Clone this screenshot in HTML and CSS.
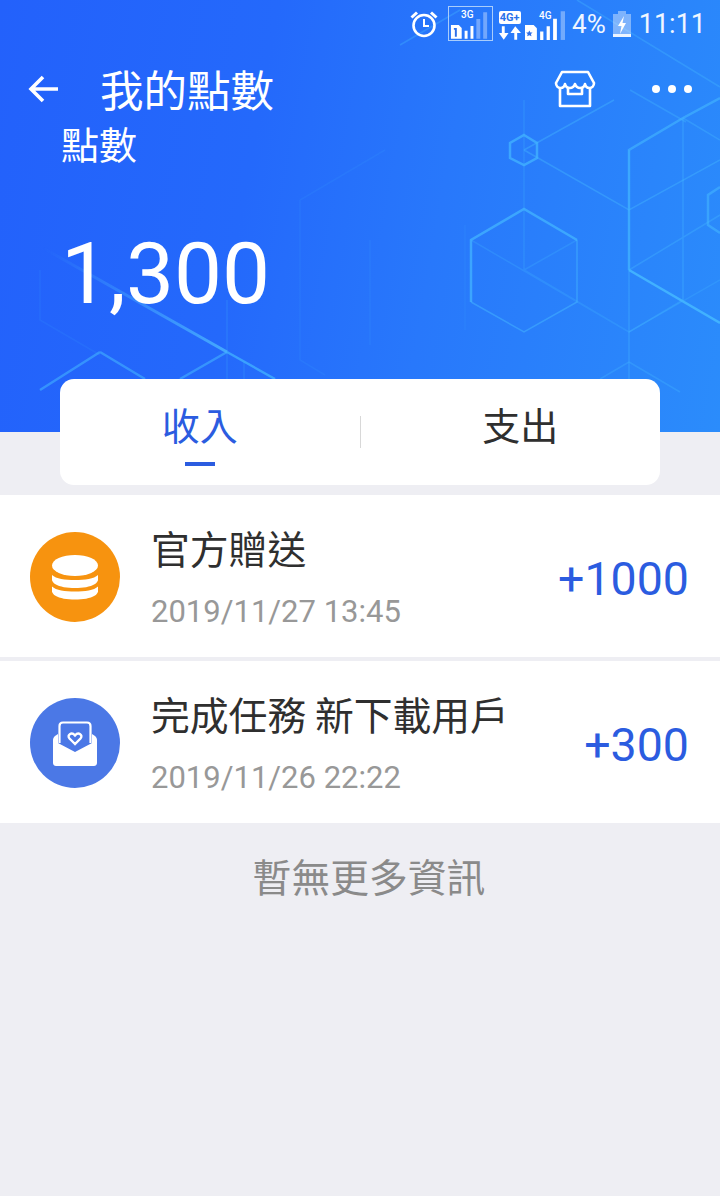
FILE: index.html
```html
<!DOCTYPE html>
<html lang="zh-Hant">
<head>
<meta charset="utf-8">
<title>我的點數</title>
<link rel="stylesheet" href="styles.css">
</head>
<body>
<div class="page">
  <header class="hero">
    <svg class="pattern" width="720" height="432" viewBox="0 0 720 432" fill="none">
      <defs>
        <linearGradient id="beam" gradientUnits="userSpaceOnUse" x1="43" y1="248" x2="227" y2="352">
          <stop offset="0" stop-color="#4db8ff" stop-opacity="0"/>
          <stop offset="1" stop-color="#4db8ff" stop-opacity=".8"/>
        </linearGradient>
      </defs>
      <path stroke="url(#beam)" stroke-width="3" d="M43 248L227 352"/>
      <g stroke="#45b8ff" stroke-opacity=".5" stroke-width="1.5">
        <path stroke-width="2.5" stroke-opacity=".7" d="M471 302V240L524 209L577 240"/>
        <path stroke-opacity=".5" d="M577 240V302L524 332L471 302"/>
        <path stroke-opacity=".25" d="M524 100V270L629 332L720 280M524 270L577 240M471 240L629 332"/>
        <path stroke-width="2.5" stroke-opacity=".7" d="M524 135L537 143V158L524 165L510 158V143Z"/>
        <path stroke-opacity=".4" d="M524 150L614 100M524 150L629 210L720 160"/>
        <path stroke-width="2.5" stroke-opacity=".6" d="M629 270V150L683 118L720 98"/>
        <path stroke-width="2.5" stroke-opacity=".85" d="M629 270L720 323"/>
        <path stroke-opacity=".35" d="M629 270L720 215M629 150V432M683 118V300M683 118L720 140"/>
        <path stroke-width="2.5" stroke-opacity=".55" d="M720 187L708 195V225L720 233"/>
        <path stroke-opacity=".3" d="M629 332L683 300M629 362L600 379M629 362L680 392"/>
        <path stroke-opacity=".1" d="M300 200V360L325 375M300 200L385 150M465 225V330M370 240V345M40 270V320L100 355"/>
        <path stroke-width="2.5" stroke-opacity=".7" d="M227 352L275 379"/>
        <path stroke-width="2.5" stroke-opacity=".55" d="M227 352L180 379M100 352L40 390M100 352L145 379"/>
        <path stroke-opacity=".2" d="M227 300V379M244 362V379"/>
        <path stroke-opacity=".35" d="M400 45L460 10M577 0L720 87M630 90L686 122"/>
      </g>
    </svg>
    <div class="statusbar">
      <svg class="alarm" width="30" height="30" viewBox="0 0 30 30" fill="none" stroke="#fff" stroke-width="2.6">
        <circle cx="15" cy="16.500" r="10.500"/>
        <path stroke-width="2" d="M15 10v7h5"/>
        <path stroke-width="3" d="M2.500 8.500L8 3.500M27.500 8.500L22 3.500"/>
      </svg>
      <div class="sim sim-active">
        <span class="net">3G</span>
        <svg width="44" height="32" viewBox="0 0 44 32" fill="#fff">
          <path d="M2 17h8l3 3v11H2z"/>
          <path fill="#2f6fe8" d="M5 20h3v9H6v-7H5z"/>
          <path d="M16 23h3v8h-3zM22 18h3v13h-3z"/>
          <path fill-opacity=".35" d="M28 11h4v20h-4zM35 4h4v27h-4z"/>
        </svg>
      </div>
      <div class="updown">
        <span class="net-tag">4G+</span>
        <svg width="23" height="14" viewBox="0 0 24 14" fill="#fff">
          <path d="M4 0h3v7h4l-5 7-5-7h3zM17 14h3V7h4l-6-7-5 7h4z"/>
        </svg>
      </div>
      <div class="sim sim-plain">
        <span class="net net-plain">4G</span>
        <svg width="40" height="34" viewBox="1 0 37 32" preserveAspectRatio="none" fill="#fff">
          <path d="M1 17h8l3 3v11H1z"/>
          <path fill="#2f6fe8" d="M5 22l1 2h2l-1.500 1.500.5 2-2-1-2 1 .5-2L2 24h2z"/>
          <path d="M15 23h3v8h-3zM21 18h3v13h-3zM27 11h3.500v20H27z"/>
          <path fill-opacity=".35" d="M34 4h4v27h-4z"/>
        </svg>
      </div>
      <span class="status-text status-pct">4%</span>
      <svg class="battery" width="20" height="28" viewBox="0 0 20 28">
        <path fill="#fff" fill-opacity=".4" d="M6 1h8v3h5v23H1V4h5z"/>
        <path fill="#fff" fill-opacity=".85" d="M1 24h18v3H1z"/>
        <path fill="#fff" d="M12 6L6 16h3.500L8 24l6-11h-3.500z"/>
      </svg>
      <span class="status-text">11:11</span>
    </div>
    <nav class="navbar">
      <svg class="back" width="32" height="30" viewBox="0 0 32 30" fill="none" stroke="#fff" stroke-width="3.600">
        <path d="M30 15H3M15 3L3 15l12 12"/>
      </svg>
      <h1 class="title">我的點數</h1>
      <svg class="shop" width="42" height="40" viewBox="0 0 42 40" fill="none" stroke="#fff" stroke-width="2.600" stroke-linejoin="round">
        <path d="M8 3h26l6 11c0 3-2 5-4.500 5-2.500 0-4-1.500-4.500-4-.5 2.500-2.500 4-5 4s-4-1.500-5-4c-1 2.500-2.500 4-5 4s-4.500-1.500-5-4c-.5 2.500-2 4-4.500 4C4 19 2 17 2 14z"/>
        <path d="M6 19v18h30V19"/>
        <path d="M14 18v7h14v-7"/>
      </svg>
      <div class="dots"><i></i><i></i><i></i></div>
    </nav>
    <div class="label">點數</div>
    <div class="points">1,300</div>
  </header>

  <div class="tabs">
    <div class="tab tab-on">收入<span class="tab-line"></span></div>
    <span class="tab-sep"></span>
    <div class="tab tab-off">支出</div>
  </div>

  <section class="list">
    <article class="row">
      <span class="badge badge-orange">
        <svg width="46" height="45" viewBox="0 0 46 45" fill="#fff">
          <ellipse cx="23" cy="10.500" rx="23" ry="10.500"/>
          <path d="M0 20C4 24 13 25 23 25S42 24 46 20C47 24 46 27 43 29 38 32 31 33 23 33S8 32 3 29C0 27-1 24 0 20z"/>
          <path d="M0 31.500C4 35.500 13 36.500 23 36.500S42 35.500 46 31.500C47 35.500 46 38.500 43 40.500 38 43.500 31 44.500 23 44.500S8 43.500 3 40.500C0 38.500-1 35.500 0 31.500z"/>
        </svg>
      </span>
      <div class="info">
        <div class="name">官方贈送</div>
        <div class="date">2019/11/27 13:45</div>
      </div>
      <div class="amount">+1000</div>
    </article>
    <article class="row">
      <span class="badge badge-blue">
        <svg width="44" height="45" viewBox="0 0 44 45" fill="none">
          <path fill="#fff" d="M0 19c0-2 1-3 2-4l3-2v9l17 9 17-9v-9l3 2c1 1 2 2 2 4v23c0 2-1.500 3-3 3H3c-1.500 0-3-1-3-3z"/>
          <path stroke="#fff" stroke-width="2.200" d="M6.500 22V5c0-2 1.500-3.500 3.500-3.500h24C36 1.500 37.500 3 37.500 5v17"/>
          <path stroke="#fff" stroke-width="2.400" d="M22 23l-5.500-5.500c-3-3.500 2-7 5.500-3 3.500-4 8.500-.5 5.500 3z"/>
        </svg>
      </span>
      <div class="info">
        <div class="name">完成任務 新下載用戶</div>
        <div class="date">2019/11/26 22:22</div>
      </div>
      <div class="amount">+300</div>
    </article>
  </section>

  <p class="empty">暫無更多資訊</p>
</div>
</body>
</html>
```
FILE: styles.css
```css
* { box-sizing: border-box; }
html, body { margin: 0; padding: 0; }
body {
  background: #eeeef3;
  font-family: "Noto Sans CJK TC", "Roboto", sans-serif;
}
.page { width: 720px; min-height: 1196px; overflow: hidden; }

.hero {
  position: relative;
  height: 432px;
  background: linear-gradient(100deg, #2361fb 0%, #2469fb 35%, #2878fb 60%, #2b8cfb 100%);
  color: #fff;
  overflow: hidden;
}
.pattern { position: absolute; left: 0; top: 0; filter: blur(.6px); }

.statusbar {
  position: relative;
  height: 44px;
  display: flex;
  align-items: center;
  padding: 3px 14px 0 0;
  justify-content: flex-end;
}
.alarm { margin-right: 9px; }
.sim { position: relative; display: flex; height: 34px; align-items: flex-end; }
.sim-active { width: 45px; height: 35px; border: 1px solid #a9cdfb; margin-right: 5px; }
.sim-plain { width: 40px; }
.net {
  position: absolute; left: 12px; top: 2px;
  font: 500 10px/12px "Roboto", sans-serif; color: #fff;
}
.net-plain { left: 14px; top: 3px; }
.updown { display: flex; flex-direction: column; align-items: center; gap: 2px; width: 23px; margin: 4px 4px 0 0; }
.net-tag {
  background: #fff; color: #2a72ea; border-radius: 2px;
  font: 700 11px/13px "Roboto", sans-serif; padding: 0 1px;
  white-space: nowrap;
}
.status-text {
  font: 400 27px/32px "Roboto", sans-serif;
  color: #f0f6ff;
}
.status-pct { font-size: 26px; margin-left: 7px; }
.battery { margin: 0 7px 0 6px; }

.navbar {
  position: relative;
  display: flex;
  align-items: center;
  height: 56px;
  margin-top: 17px;
  padding-left: 28px;
}
.back { flex: none; }
.title {
  margin: 0 0 0 40px;
  font-weight: 400;
  font-size: 43.500px;
  line-height: 56px;
  flex: 1;
  white-space: nowrap;
}
.shop { flex: none; margin-right: 56px; }
.dots { display: flex; gap: 8px; margin-right: 28px; flex: none; }
.dots i { width: 8px; height: 8px; border-radius: 50%; background: #fff; }

.label {
  position: relative;
  margin: 4px 0 0 61px;
  font-size: 38px;
  line-height: 44px;
}
.points {
  position: relative;
  margin: 59px 0 0 61px;
  font: 400 85.500px/100px "Roboto", sans-serif;
}

.tabs {
  position: relative;
  margin: -53px 60px 0;
  height: 106px;
  background: #fff;
  border-radius: 14px;
  display: flex;
  align-items: center;
}
.tab {
  position: relative;
  flex: 1;
  height: 106px;
  text-align: center;
  font-size: 38px;
  line-height: 90px;
  color: #2f2f2f;
}
.tab-on { color: #2b5ce0; padding-right: 20px; }
.tab-off { padding-left: 20px; }
.tab-line {
  position: absolute;
  left: 125px; bottom: 19px;
  width: 30px; height: 4px;
  background: #2b5ce0;
}
.tab-sep { flex: none; width: 1px; height: 32px; background: #d8d8d8; }

.list { margin-top: 10px; display: flex; flex-direction: column; gap: 4px; }
.row {
  height: 162px;
  background: #fff;
  display: flex;
  align-items: center;
  padding: 0 31px 0 30px;
}
.badge {
  flex: none;
  width: 90px; height: 90px;
  margin-top: 2px;
  border-radius: 50%;
  display: flex;
  align-items: center;
  justify-content: center;
}
.badge-orange { background: #f7930f; }
.badge-blue { background: #4b78e6; }
.info { flex: 1; margin-left: 31px; min-width: 0; padding-bottom: 2px; }
.name {
  font-size: 38.800px;
  line-height: 54px;
  color: #2f2f2f;
  white-space: nowrap;
}
.date {
  margin-top: 20px;
  font: 400 31px/36px "Roboto", sans-serif;
  color: #989898;
  white-space: nowrap;
}
.amount {
  flex: none;
  padding-top: 6px;
  font: 400 46.500px/60px "Roboto", sans-serif;
  color: #2b5ce0;
}
.empty {
  margin: 24px 0 0;
  padding-left: 18px;
  text-align: center;
  font-size: 38.800px;
  line-height: 56px;
  color: #8a8a8a;
}
```
